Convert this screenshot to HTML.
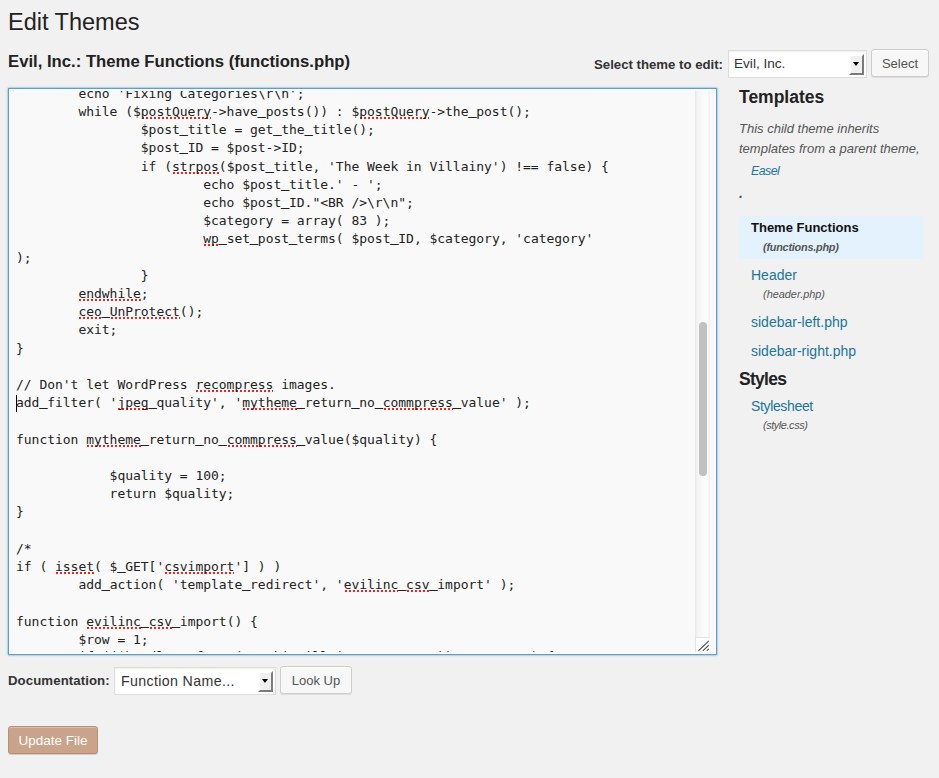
<!DOCTYPE html>
<html lang="en">
<head>
<meta charset="utf-8">
<title>Edit Themes</title>
<style>
html,body{margin:0;padding:0}
body{width:939px;height:778px;overflow:hidden;background:#f1f1f1;font-family:"Liberation Sans",sans-serif;color:#444;position:relative}
.abs{position:absolute;white-space:nowrap;margin:0;padding:0}
h2.abs{left:8px;top:7px;font-size:23.5px;font-weight:400;color:#222;line-height:30px}
h3.title{left:8px;top:50px;font-size:16.7px;font-weight:700;color:#222;line-height:24px}
.lbl{font-size:13.2px;font-weight:700;color:#333;line-height:20px}
.sel{position:absolute;background:#fff;border:1px solid #ddd;box-sizing:border-box;box-shadow:inset 0 1px 2px rgba(0,0,0,.07);font-size:13.6px;color:#333}
.sel span{position:absolute;left:5px;top:0;line-height:26px}
.sel i{position:absolute;right:2px;top:2.5px;width:15px;height:21.5px;box-sizing:border-box;border:2px solid;border-color:#fff #7b7b7b #7b7b7b #fff;background:#f0f0f0}
.sel i:after{content:"";position:absolute;left:2px;top:6px;border:3.5px solid transparent;border-top:4.2px solid #000;border-bottom:0}
.btn{position:absolute;box-sizing:border-box;border:1px solid #ccc;border-radius:3px;background:#f7f7f7;box-shadow:inset 0 1px 0 #fff,0 1px 0 rgba(0,0,0,.08);color:#555;font-size:13px;text-align:center;line-height:27.6px}
.btn.primary{background:#c9a48b;border-color:#b88f75;color:#fff;box-shadow:inset 0 1px 0 rgba(255,255,255,.3),0 1px 0 rgba(0,0,0,.15)}
#ta{position:absolute;left:8px;top:88px;width:709px;height:567px;box-sizing:border-box;border:1px solid #5b9dd9;background:#f9f9f9;box-shadow:0 0 2px rgba(30,140,190,.8), inset 0 0 0 1px #fff;overflow:hidden}
#code{position:absolute;left:0;top:2px;right:0;bottom:2px;overflow:hidden}
#code .in{position:absolute;left:7px;top:-6.2px;font-family:"DejaVu Sans Mono","Liberation Mono",monospace;font-size:13px;letter-spacing:-0.027px;line-height:18.2px;color:#222;tab-size:62.4px;-moz-tab-size:62.4px}
.ln{position:absolute;left:0;white-space:pre;height:18.2px}
.ln s{text-decoration:none;position:relative;top:-1px;-webkit-text-stroke:0.6px #222}
.ln u{text-decoration:none;background:linear-gradient(90deg,#f0221c 0,#f0221c 50%,transparent 50%) 1px 13px/4px 2px repeat-x}
#track{position:absolute;left:686px;top:2px;width:15px;height:546px;background:linear-gradient(90deg,#e2e2e2 0,#eeeeee 1px,#f5f5f5 3px,#fbfbfb 10px,#fcfcfc 13px,#f0f0f0 14px,#f4f4f4 15px)}
#thumb{position:absolute;left:690px;top:233px;width:8px;height:154px;border-radius:4px;background:#c1c1c1}
#grip{position:absolute;left:686px;top:548px;width:15px;height:15px;background:#fff;border-left:1px solid #e4e4e4;border-top:1px solid #e4e4e4;box-sizing:border-box}
#caret{position:absolute;left:7px;top:306px;width:1px;height:17px;background:#000}
.side h3{font-size:17.5px;font-weight:700;color:#222;line-height:24px}
.it{font-size:13px;font-style:italic;color:#555;line-height:20px}
a{color:#21759b;text-decoration:none}
.lnk{font-size:14px;line-height:20px}
.sm{font-size:10.9px;font-style:italic;color:#555;line-height:16px}
#hl{position:absolute;left:739px;top:216px;width:184px;height:43px;background:#e4f2fd}
</style>
</head>
<body>
<h2 class="abs">Edit Themes</h2>
<h3 class="abs title">Evil, Inc.: Theme Functions (functions.php)</h3>

<div class="abs lbl" style="left:594px;top:55px">Select theme to edit:</div>
<div class="sel" style="left:728px;top:50px;width:139px;height:28px"><span>Evil, Inc.</span><i></i></div>
<div class="btn" style="left:871px;top:49px;width:58px;height:28px">Select</div>

<div id="ta">
 <div id="code"><div class="in">
<div class="ln" style="top:0.0px">	echo 'Fixing Categories\r\n';</div>
<div class="ln" style="top:18.2px">	while ($<u>postQuery</u>-&gt;have<s>_</s>posts()) : $<u>postQuery</u>-&gt;the<s>_</s>post();</div>
<div class="ln" style="top:36.4px">		$post<s>_</s>title = get<s>_</s>the<s>_</s>title();</div>
<div class="ln" style="top:54.6px">		$post<s>_</s>ID = $post-&gt;ID;</div>
<div class="ln" style="top:72.8px">		if (<u>strpos</u>($post<s>_</s>title, 'The Week in Villainy') !== false) {</div>
<div class="ln" style="top:91.0px">			echo $post<s>_</s>title.' - ';</div>
<div class="ln" style="top:109.2px">			echo $post<s>_</s>ID."&lt;BR /&gt;\r\n";</div>
<div class="ln" style="top:127.4px">			$category = array( 83 );</div>
<div class="ln" style="top:145.6px">			<u>wp</u><s>_</s>set<s>_</s>post<s>_</s>terms( $post<s>_</s>ID, $category, 'category'</div>
<div class="ln" style="top:163.8px">);</div>
<div class="ln" style="top:182.0px">		}</div>
<div class="ln" style="top:200.2px">	<u>endwhile</u>;</div>
<div class="ln" style="top:218.4px">	<u>ceo</u><s>_</s><u>UnProtect</u>();</div>
<div class="ln" style="top:236.6px">	exit;</div>
<div class="ln" style="top:254.8px">}</div>
<div class="ln" style="top:291.2px">// Don't let WordPress <u>recompress</u> images.</div>
<div class="ln" style="top:309.4px">add<s>_</s>filter( '<u>jpeg</u><s>_</s>quality', '<u>mytheme</u><s>_</s>return<s>_</s>no<s>_</s><u>commpress</u><s>_</s>value' );</div>
<div class="ln" style="top:345.8px">function <u>mytheme</u><s>_</s>return<s>_</s>no<s>_</s><u>commpress</u><s>_</s>value($quality) {</div>
<div class="ln" style="top:382.2px">	    $quality = 100;</div>
<div class="ln" style="top:400.4px">	    return $quality;</div>
<div class="ln" style="top:418.6px">}</div>
<div class="ln" style="top:455.0px">/*</div>
<div class="ln" style="top:473.2px">if ( <u>isset</u>( $<s>_</s>GET['<u>csvimport</u>'] ) )</div>
<div class="ln" style="top:491.4px">	add<s>_</s>action( 'template<s>_</s>redirect', '<u>evilinc</u><s>_</s><u>csv</u><s>_</s>import' );</div>
<div class="ln" style="top:527.8px">function <u>evilinc</u><s>_</s><u>csv</u><s>_</s>import() {</div>
<div class="ln" style="top:546.0px">	$row = 1;</div>
<div class="ln" style="top:563.3px">	if (($handle = fopen("weekinvillainy.csv", "r")) !== FALSE) {</div>
 </div></div>
 <div id="caret"></div>
 <div id="track"></div>
 <div id="thumb"></div>
 <div id="grip"><svg width="14" height="14" viewBox="0 0 14 14" style="position:absolute;left:0;top:0"><path d="M2.4 12.8 L12.8 2.9 M6.8 12.8 L12.8 7.1 M10.8 12.8 L12.8 10.9" stroke="#4a4a4a" stroke-width="1.1" fill="none"/></svg></div>
</div>

<div class="side">
<h3 class="abs" style="left:739px;top:85px">Templates</h3>
<div class="abs it" style="left:739px;top:119px">This child theme inherits</div>
<div class="abs it" style="left:739px;top:139px">templates from a parent theme,</div>
<a class="abs it" style="left:751px;top:161px;color:#21759b;font-size:12.3px;letter-spacing:-0.5px">Easel</a>
<div class="abs it" style="left:739px;top:183px;font-weight:700;font-size:14px">.</div>
<div id="hl"></div>
<div class="abs lnk" style="left:751px;top:218px;font-weight:700;color:#111;font-size:13px">Theme Functions</div>
<div class="abs sm" style="left:763px;top:239px;font-weight:700;letter-spacing:-0.24px">(functions.php)</div>
<a class="abs lnk" style="left:751px;top:265px">Header</a>
<div class="abs sm" style="left:763px;top:286px">(header.php)</div>
<a class="abs lnk" style="left:751px;top:312px">sidebar-left.php</a>
<a class="abs lnk" style="left:751px;top:341px">sidebar-right.php</a>
<h3 class="abs" style="left:739px;top:367px;letter-spacing:-0.73px">Styles</h3>
<a class="abs lnk" style="left:751px;top:396px;letter-spacing:-0.35px">Stylesheet</a>
<div class="abs sm" style="left:763px;top:417px;letter-spacing:-0.42px">(style.css)</div>
</div>

<div class="abs lbl" style="left:8px;top:671px;letter-spacing:0.1px">Documentation:</div>
<div class="sel" style="left:114px;top:667px;width:162px;height:28px"><span style="left:6px;font-size:14.2px;letter-spacing:0.36px">Function Name...</span><i></i></div>
<div class="btn" style="left:280px;top:666px;width:72px;height:28px">Look Up</div>
<div class="btn primary" style="left:8px;top:726px;width:90px;height:28px;font-size:13.5px">Update File</div>
</body>
</html>
